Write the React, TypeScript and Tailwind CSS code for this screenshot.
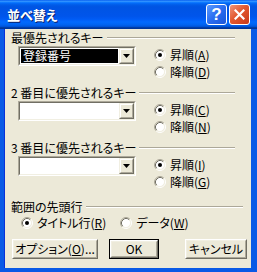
import type { ReactNode } from "react";

const jp = "font-['Noto_Sans_CJK_JP',sans-serif] [font-feature-settings:'palt']";

function Radio({ checked }: { checked?: boolean }) {
  return (
    <svg width="12" height="12" viewBox="0 0 12 12" className="shrink-0">
      <circle cx="6" cy="6" r="4.5" fill="#ffffff" />
      <path d="M2.11 9.89A5.5 5.5 0 0 1 9.89 2.11" stroke="#aca899" fill="none" />
      <path d="M9.89 2.11A5.5 5.5 0 0 1 2.11 9.89" stroke="#ffffff" fill="none" />
      <path d="M2.82 9.18A4.5 4.5 0 0 1 9.18 2.82" stroke="#716f64" fill="none" />
      <path d="M9.18 2.82A4.5 4.5 0 0 1 2.82 9.18" stroke="#f1efe2" fill="none" />
      {checked ? <circle cx="6" cy="6" r="2" fill="#000000" /> : null}
    </svg>
  );
}

function RadioItem({
  label,
  accel,
  checked,
}: {
  label: string;
  accel: string;
  checked?: boolean;
}) {
  return (
    <div className="flex h-[17px] items-center">
      <Radio checked={checked} />
      <span className="ml-[4px] text-[12px] leading-[14px] text-black">
        {label}(<span className="underline underline-offset-1">{accel}</span>)
      </span>
    </div>
  );
}

function GroupHeader({ title, lineEnd }: { title: string; lineEnd: string }) {
  return (
    <div className="flex h-[14px] items-center">
      <span className="text-[12px] leading-[14px] text-black">{title}</span>
      <div className={`ml-[3px] h-[2px] flex-1 border-t border-b border-t-[#aca899] border-b-white ${lineEnd}`} />
    </div>
  );
}

function Combo({ value }: { value?: string }) {
  return (
    <div className="ml-[7px] flex h-[20px] w-[118px] shrink-0 border border-t-[#aca899] border-l-[#aca899] border-b-white border-r-white">
      <div className="flex flex-1 border border-t-[#716f64] border-l-[#716f64] border-b-[#f1efe2] border-r-[#f1efe2] bg-white">
        <div className="flex-1 p-px">
          {value ? (
            <div className="flex h-full items-center bg-black pl-[2px] text-[12px] leading-[14px] text-white">
              {value}
            </div>
          ) : null}
        </div>
        <div className="flex w-[15px] border border-t-[#f1efe2] border-l-[#f1efe2] border-b-[#716f64] border-r-[#716f64]">
          <div className="flex flex-1 items-center justify-center border border-t-white border-l-white border-b-[#aca899] border-r-[#aca899] bg-[#ece9d8]">
            <svg width="7" height="4" viewBox="0 0 7 4">
              <path d="M0 0H7L3.5 4Z" fill="#000000" />
            </svg>
          </div>
        </div>
      </div>
    </div>
  );
}

function SortGroup({
  title,
  value,
  items,
  className,
}: {
  title: string;
  value?: string;
  items: { label: string; accel: string; checked?: boolean }[];
  className?: string;
}) {
  return (
    <div className={className}>
      <GroupHeader title={title} lineEnd="mr-[16px]" />
      <div className="mt-px flex h-[34px]">
        <Combo value={value} />
        <div className="ml-[18px] flex flex-col">
          {items.map((item) => (
            <RadioItem key={item.accel} {...item} />
          ))}
        </div>
      </div>
    </div>
  );
}

function Button({
  children,
  width,
  isDefault,
}: {
  children: ReactNode;
  width: string;
  isDefault?: boolean;
}) {
  return (
    <div className={`h-[20px] shrink-0 ${width} ${isDefault ? "border border-black" : ""}`}>
      <div className="flex h-full border border-t-white border-l-white border-b-[#716f64] border-r-[#716f64]">
        <div className="flex flex-1 items-center justify-center border border-t-[#f1efe2] border-l-[#f1efe2] border-b-[#aca899] border-r-[#aca899] text-[12px] leading-[14px] text-black">
          {children}
        </div>
      </div>
    </div>
  );
}

function CaptionButton({ kind }: { kind: "help" | "close" }) {
  return (
    <div
      className={`flex h-[21px] w-[21px] items-center justify-center rounded-[3px] border border-white ${
        kind === "help"
          ? "bg-[linear-gradient(135deg,#5c9bff_0%,#2a6cf0_50%,#1a56d8_100%)]"
          : "bg-[linear-gradient(135deg,#f0957a_0%,#e2582f_45%,#c8391a_100%)]"
      }`}
    >
      {kind === "help" ? (
        <span className="font-['Liberation_Sans',sans-serif] text-[17px] font-bold leading-none text-white">?</span>
      ) : (
        <svg width="11" height="11" viewBox="0 0 11 11">
          <path d="M1.5 1.5L9.5 9.5M9.5 1.5L1.5 9.5" stroke="#ffffff" strokeWidth="2.2" strokeLinecap="square" />
        </svg>
      )}
    </div>
  );
}

export default function App() {
  return (
    <div className={`flex h-[272px] w-[257px] flex-col bg-[#0a5ae6] ${jp}`}>
      <div className="flex h-[29px] shrink-0 items-center bg-[linear-gradient(to_bottom,#0058ee_0%,#3593ff_4%,#288eff_6%,#127dff_8%,#036ffc_10%,#0262ee_14%,#0057e5_20%,#0054e3_24%,#0055eb_56%,#005bf5_66%,#026afe_76%,#0062ef_86%,#0052d6_92%,#0040ab_94%,#003092_100%)] pl-[7px] pr-[7px]">
        <span className="text-[13px] font-bold leading-[16px] text-white [text-shadow:1px_1px_0_#0a1f6a]">
          並べ替え
        </span>
        <div className="ml-auto flex gap-[2px]">
          <CaptionButton kind="help" />
          <CaptionButton kind="close" />
        </div>
      </div>

      <div className="mb-[4px] ml-[4px] mr-[6px] flex flex-1 flex-col border-l border-l-[#0831d9] bg-[#ece9d8] pl-[6px] pt-[2px]">
        <SortGroup
          title="最優先されるキー"
          value="登録番号"
          items={[
            { label: "昇順", accel: "A", checked: true },
            { label: "降順", accel: "D" },
          ]}
        />
        <SortGroup
          className="mt-[6px]"
          title="2 番目に優先されるキー"
          items={[
            { label: "昇順", accel: "C", checked: true },
            { label: "降順", accel: "N" },
          ]}
        />
        <SortGroup
          className="mt-[6px]"
          title="3 番目に優先されるキー"
          items={[
            { label: "昇順", accel: "I", checked: true },
            { label: "降順", accel: "G" },
          ]}
        />

        <div className="mt-[10px]">
          <GroupHeader title="範囲の先頭行" lineEnd="mr-[8px]" />
          <div className="ml-[10px] flex">
            <RadioItem label="タイトル行" accel="R" checked />
            <div className="ml-[14px]">
              <RadioItem label="データ" accel="W" />
            </div>
          </div>
        </div>

        <div className="mt-[8px] flex">
          <Button width="w-[86px] ml-px">
            オプション(<span className="underline underline-offset-1">O</span>)...
          </Button>
          <Button width="w-[50px] ml-[11px]" isDefault>
            OK
          </Button>
          <Button width="w-[62px] ml-[26px]">キャンセル</Button>
        </div>
      </div>
    </div>
  );
}
